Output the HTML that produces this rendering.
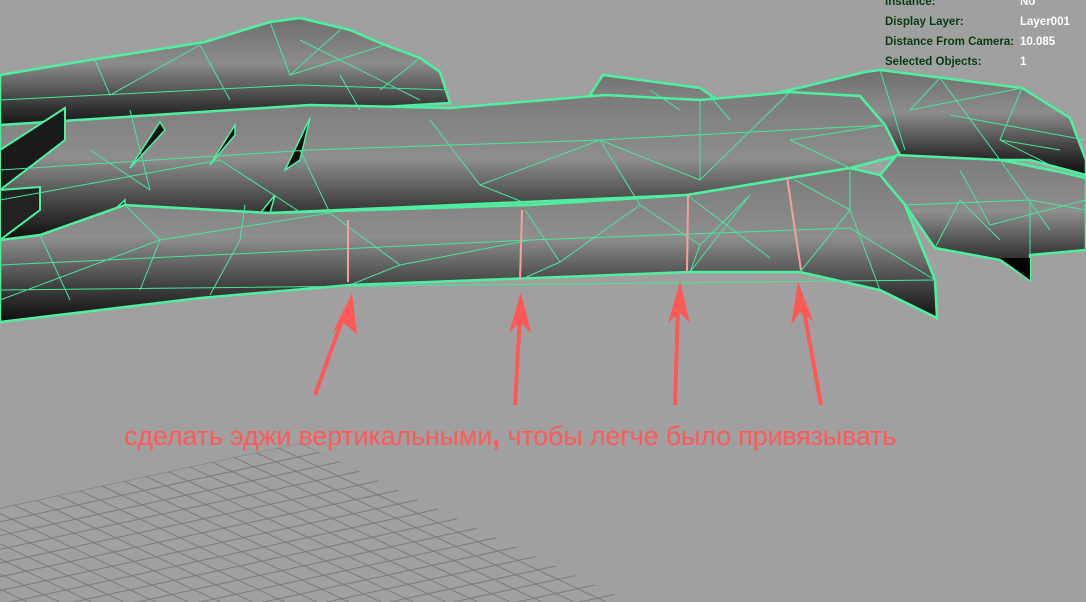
<!DOCTYPE html>
<html><head><meta charset="utf-8"><style>
html,body{margin:0;padding:0;background:#a0a0a0;width:1086px;height:602px;overflow:hidden}
svg{position:absolute;left:0;top:0}
.hud{position:absolute;font:bold 11.5px "Liberation Sans",sans-serif;color:#0a3a14}
.hv{color:#fff}
.cap{position:absolute;left:124px;top:419px;font:27px "Liberation Sans","DejaVu Sans",sans-serif;color:#ff5a5a;white-space:nowrap;letter-spacing:-0.2px}
</style></head><body>
<svg width="1086" height="602" viewBox="0 0 1086 602">
<defs>
<linearGradient id="g1" x1="0" y1="0" x2="0" y2="1"><stop offset="0" stop-color="#7a7a7a"/><stop offset="0.45" stop-color="#8e8e8e"/><stop offset="0.75" stop-color="#444"/><stop offset="1" stop-color="#0c0c0c"/></linearGradient>
<linearGradient id="g2" x1="0" y1="0" x2="0" y2="1"><stop offset="0" stop-color="#6e6e6e"/><stop offset="0.4" stop-color="#8c8c8c"/><stop offset="0.8" stop-color="#333"/><stop offset="1" stop-color="#0c0c0c"/></linearGradient>
<clipPath id="gc"><polygon points="300,443 0,508 0,602 630,602"/></clipPath>
</defs>
<g id="grid" clip-path="url(#gc)" stroke="#7c7c7c" stroke-width="1" fill="none"></g>

<polygon points="0,75 90,60 205,42 270,22 300,18 350,30 385,45 420,58 440,72 450,103 300,112 0,130" fill="url(#g2)" stroke="#4ef0a0" stroke-width="2.5"/>
<polygon points="590,95 603,75 700,88 725,105 790,90 865,72 880,70 1022,88 1070,118 1086,160 1086,175 1030,160 900,160 700,120" fill="url(#g2)" stroke="#4ef0a0" stroke-width="2.5"/>
<polygon points="0,125 310,105 450,108 605,95 700,100 790,92 860,96 885,125 900,155 850,168 687,195 270,213 0,240" fill="url(#g1)" stroke="#4ef0a0" stroke-width="2.5"/>
<polygon points="0,150 65,108 65,140 0,190" fill="#1a1a1a" stroke="#4ef0a0" stroke-width="2"/>
<polygon points="0,190 40,187 40,210 0,240" fill="#222" stroke="#4ef0a0" stroke-width="2"/>
<polygon points="125,200 125,210 90,232" fill="#111" stroke="#4ef0a0" stroke-width="1.5"/>
<polygon points="160,122 165,130 130,168" fill="#111" stroke="#4ef0a0" stroke-width="1.5"/>
<polygon points="235,125 235,135 210,165" fill="#111" stroke="#4ef0a0" stroke-width="1.5"/>
<polygon points="310,118 300,160 285,170" fill="#111" stroke="#4ef0a0" stroke-width="1.5"/>
<polygon points="275,195 270,213 240,238" fill="#111" stroke="#4ef0a0" stroke-width="1.5"/>
<polygon points="880,175 897,155 1000,160 1060,172 1086,178 1086,250 1030,255 1030,280 1000,260 935,248 905,205" fill="url(#g1)" stroke="#4ef0a0" stroke-width="2.5"/>
<polygon points="0,240 40,235 125,205 270,213 530,205 687,195 850,168 880,175 905,205 935,280 937,318 880,290 800,272 690,272 350,285 200,298 0,322" fill="url(#g1)" stroke="#4ef0a0" stroke-width="2.5"/>
<g stroke="#4ae39c" stroke-width="1" fill="none">
<path d="M0,290 L937,280 M0,265 L530,240 L850,228 L935,280 M40,235 L70,300 M125,205 L160,240 L140,290 M245,205 L240,240 L210,295 M330,213 L400,265 M400,265 L350,285 M525,210 L560,262 L520,280 M640,205 L700,245 L690,272 M687,195 L770,258 M795,180 L850,210 L880,290 M850,168 L850,210 M850,210 L800,272 M750,195 L690,272 M0,300 L160,240 L330,213 M400,265 L530,240 M700,245 L750,195 M560,262 L640,205"/>
<path d="M0,170 L310,150 L600,140 L885,125 M90,150 L150,190 M150,190 L130,110 M300,150 L330,213 M430,120 L480,185 L600,140 M600,140 L700,180 L790,92 M700,100 L700,180 M790,140 L850,168 M790,140 L885,125 M480,185 L530,205 M220,160 L300,212 M0,200 L220,160 M600,140 L640,205"/>
<path d="M95,60 L110,95 L200,45 M270,22 L290,75 L340,30 M290,75 L385,45 M300,40 L420,100 M340,75 L360,110 M380,90 L420,58 M200,45 L230,100 M0,100 L300,85 L450,90"/>
<path d="M650,90 L680,110 M705,90 L730,120 M880,70 L905,150 M940,78 L1000,160 M940,78 L910,110 L1022,88 M1022,88 L1000,140 L1060,150 M1000,140 L1050,165 M950,115 L1086,140"/>
<path d="M905,205 L1030,200 L1086,210 M935,248 L960,200 L1000,240 M1030,200 L1030,255 M960,170 L990,225 L1086,200 M1000,160 L1050,230"/>
</g>
<polygon points="1000,258 1030,258 1030,280" fill="#000"/>
<g stroke="#f5a0a0" stroke-width="2">
<line x1="348" y1="220" x2="348" y2="282"/>
<line x1="522" y1="210" x2="520" y2="280"/>
<line x1="688" y1="195" x2="687" y2="272"/>
<line x1="787" y1="177" x2="801" y2="270"/>
</g>
<g stroke="#ff5858" stroke-width="4" fill="#ff5858">
<line x1="315" y1="395" x2="344" y2="315"/>
<polygon stroke="none" points="352,293 332,334 342,322 357,334"/>
<line x1="515" y1="405" x2="520" y2="315"/>
<polygon stroke="none" points="521,292 509,333 520,322 531,333"/>
<line x1="675" y1="405" x2="678" y2="305"/>
<polygon stroke="none" points="680,282 668,323 679,312 690,323"/>
<line x1="821" y1="405" x2="803" y2="305"/>
<polygon stroke="none" points="798,282 791,325 800,312 813,321"/>
</g>
</svg>
<div class="hud" style="left:885px;top:-4px">Instance:</div><div class="hud hv" style="left:1020px;top:-4px">No</div>
<div class="hud" style="left:885px;top:16px">Display Layer:</div><div class="hud hv" style="left:1020px;top:16px">Layer001</div>
<div class="hud" style="left:885px;top:36px">Distance From Camera:</div><div class="hud hv" style="left:1020px;top:36px">10.085</div>
<div class="hud" style="left:885px;top:56px">Selected Objects:</div><div class="hud hv" style="left:1020px;top:56px">1</div>
<div class="cap">сделать эджи вертикальными<b style="font-size:30px">,</b> чтобы легче было привязывать</div>
<script>
var g=document.getElementById('grid'),s='';
for(var i=-40;i<40;i++){
 var x0=300+i*20, y0=443+i*20*0.47;
 s+='<line x1="'+(x0+400)+'" y1="'+(y0-87)+'" x2="'+(x0-700)+'" y2="'+(y0+152)+'"/>';
 var x1=300-i*22, y1=443+i*22*0.217;
 s+='<line x1="'+(x1-400)+'" y1="'+(y1-188)+'" x2="'+(x1+700)+'" y2="'+(y1+329)+'"/>';
}
g.innerHTML=s;
</script>
</body></html>
